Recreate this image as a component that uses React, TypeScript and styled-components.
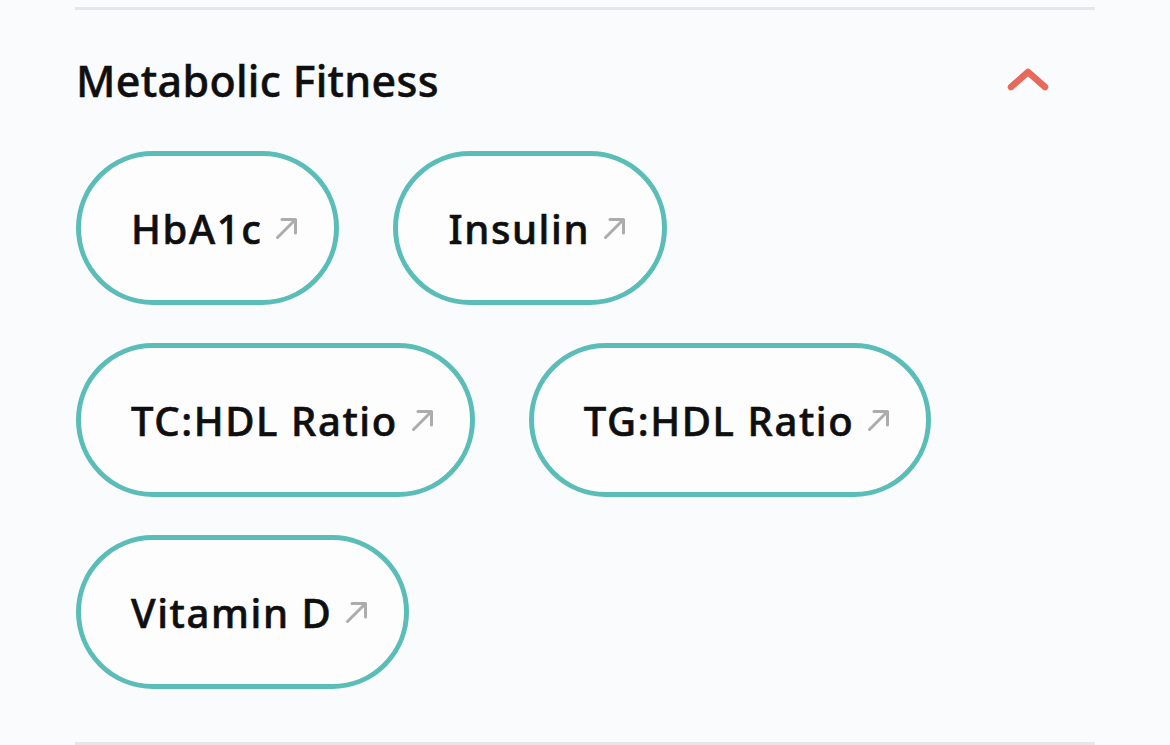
import styled, { createGlobalStyle } from 'styled-components';

const GlobalStyle = createGlobalStyle`
  html, body {
    margin: 0;
    padding: 0;
    background: #fafbfd;
  }

  body {
    font-family: 'Noto Sans', 'Open Sans', sans-serif;
    color: #111111;
  }
`;

const markers = ['HbA1c', 'Insulin', 'TC:HDL Ratio', 'TG:HDL Ratio', 'Vitamin D'];

const ArrowIcon = () => (
  <svg width="24" height="24" viewBox="0 0 24 24" fill="none">
    <path
      d="M2.5 21.5 L20.5 3.5 M7 3.5 H20.5 V17"
      stroke="#acacac"
      strokeWidth="3"
      strokeLinecap="round"
      strokeLinejoin="round"
    />
  </svg>
);

const ChevronUp = () => (
  <svg width="42" height="26" viewBox="0 0 42 26" fill="none">
    <path
      d="M4 20 L21 5 L38 20"
      stroke="#e8685a"
      strokeWidth="6.5"
      strokeLinecap="round"
      strokeLinejoin="round"
    />
  </svg>
);

const App = () => {
  return (
    <>
      <GlobalStyle />
      <Section>
        <Divider />
        <Header>
          <Title>Metabolic Fitness</Title>
          <ToggleButton aria-label="Collapse">
            <ChevronUp />
          </ToggleButton>
        </Header>
        <PillList>
          {markers.map((name) => (
            <Pill key={name}>
              <PillLabel>{name}</PillLabel>
              <ArrowIcon />
            </Pill>
          ))}
        </PillList>
        <Divider $bottom />
      </Section>
    </>
  );
};

const Section = styled.section`
  width: 1170px;
  height: 745px;
  box-sizing: border-box;
  padding: 7px 75px 0;
  display: flex;
  flex-direction: column;
`;

const Divider = styled.div<{ $bottom?: boolean }>`
  height: 3px;
  background: #e6e7ea;
  margin-top: ${(p) => (p.$bottom ? '53px' : '0')};
`;

const Header = styled.div`
  height: 140px;
  display: flex;
  align-items: center;
  justify-content: space-between;
  padding: 0 46px 0 1px;
`;

const Title = styled.h2`
  margin: 0;
  font-size: 43px;
  font-weight: 500;
  letter-spacing: 0.3px;
  color: #0f0f10;
  -webkit-text-stroke: 0.5px #0f0f10;
`;

const ToggleButton = styled.button`
  background: none;
  border: none;
  padding: 0;
  display: flex;
  cursor: pointer;
`;

const PillList = styled.div`
  margin-top: 1px;
  padding-left: 1px;
  display: flex;
  flex-wrap: wrap;
  column-gap: 54px;
  row-gap: 38px;
  max-width: 900px;
`;

const Pill = styled.button`
  height: 154px;
  box-sizing: border-box;
  border: 5px solid #5bbdb7;
  border-radius: 77px;
  background: #fdfdfe;
  display: flex;
  align-items: center;
  gap: 13px;
  padding: 0 35px 0 50px;
  cursor: pointer;
  font-family: inherit;
`;

const PillLabel = styled.span`
  font-size: 40px;
  font-weight: 500;
  letter-spacing: 1.6px;
  color: #0f0f10;
  -webkit-text-stroke: 0.6px #0f0f10;
`;

export default App;
